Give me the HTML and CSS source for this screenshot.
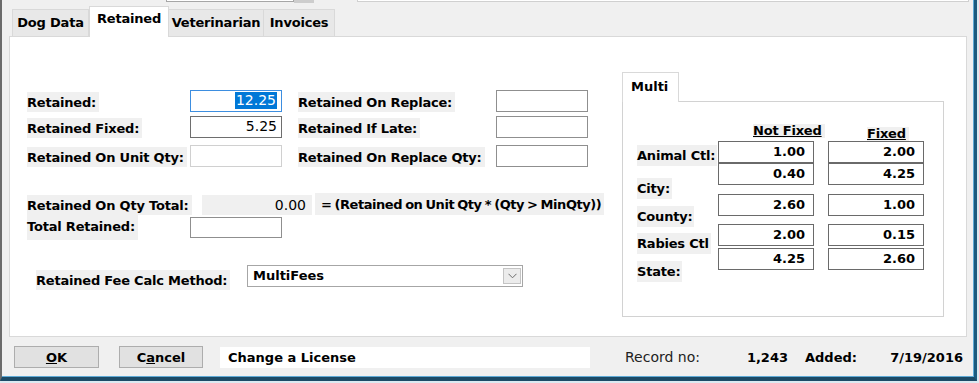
FILE: index.html
```html
<!DOCTYPE html>
<html lang="en">
<head>
    <meta charset="UTF-8">
    <title>Change a License - Retained</title>
    <link rel="stylesheet" href="styles.css">
</head>
<body>
<div class="window">

    <!-- top of the form, cut off -->
    <div class="topbar">
        <span class="combo"></span><span class="combo-btn"></span>
        <span class="topfield"></span>
    </div>

    <!-- Tabs -->
    <div class="tabs">
        <div class="tab">Dog Data</div>
        <div class="tab active">Retained</div>
        <div class="tab">Veterinarian</div>
        <div class="tab">Invoices</div>
    </div>

    <div class="panel">
        <div class="form">
            <div class="row r1">
                <div class="lcell"><span class="lbl">Retained:</span></div>
                <div class="fld focus"><span class="hl">12.25</span></div>
                <div class="lcell2"><span class="lbl">Retained On Replace:</span></div>
                <div class="fld"></div>
            </div>
            <div class="row r2">
                <div class="lcell"><span class="lbl">Retained Fixed:</span></div>
                <div class="fld dark">5.25</div>
                <div class="lcell2"><span class="lbl">Retained If Late:</span></div>
                <div class="fld"></div>
            </div>
            <div class="row r3">
                <div class="lcell"><span class="lbl">Retained On Unit Qty:</span></div>
                <div class="fld faint"></div>
                <div class="lcell2"><span class="lbl">Retained On Replace Qty:</span></div>
                <div class="fld"></div>
            </div>

            <div class="row r4">
                <div class="lcell wide"><span class="lbl">Retained On Qty Total:</span></div>
                <div class="calc">0.00</div>
                <span class="lbl formula">= (Retained on Unit Qty * (Qty &gt; MinQty))</span>
            </div>
            <div class="row r5">
                <div class="lcell"><span class="lbl tall">Total Retained:</span></div>
                <div class="fld"></div>
            </div>

            <div class="row r6">
                <div class="lcell method"><span class="lbl">Retained Fee Calc Method:</span></div>
                <div class="dropdown">
                    <span class="dd-text">MultiFees</span>
                    <span class="dd-btn">
                        <svg width="9" height="6" viewBox="0 0 9 6"><path d="M0.5 0.8 L4.5 4.8 L8.5 0.8" fill="none" stroke="#6b6b6b" stroke-width="1"/></svg>
                    </span>
                </div>
            </div>
        </div>

        <!-- Multi fees group -->
        <div class="multi">
            <div class="mtab">Multi</div>
            <div class="mbox">
                <div class="mlabels">
                    <span class="lbl m1">Animal Ctl:</span>
                    <span class="lbl m2">City:</span>
                    <span class="lbl m3">County:</span>
                    <span class="lbl m4">Rabies Ctl</span>
                    <span class="lbl m5">State:</span>
                </div>
                <div class="mfields">
                    <div class="mhead">
                        <div class="hcell"><span class="lbl head">Not Fixed</span></div>
                        <div class="hcell second"><span class="lbl head low">Fixed</span></div>
                    </div>
                    <div class="mrow"><div class="mfld">1.00</div><div class="mfld">2.00</div></div>
                    <div class="mrow"><div class="mfld">0.40</div><div class="mfld">4.25</div></div>
                    <div class="mrow gap1"><div class="mfld">2.60</div><div class="mfld">1.00</div></div>
                    <div class="mrow gap2"><div class="mfld">2.00</div><div class="mfld">0.15</div></div>
                    <div class="mrow gap3"><div class="mfld">4.25</div><div class="mfld">2.60</div></div>
                </div>
            </div>
        </div>
    </div>

    <!-- Bottom bar -->
    <div class="bottombar">
        <button class="btn"><u>O</u>K</button>
        <button class="btn cancel">C<u>a</u>ncel</button>
        <div class="status">Change a License</div>
        <span class="rec-lbl">Record no:</span>
        <span class="rec-val">1,243</span>
        <span class="added-lbl">Added:</span>
        <span class="added-val">7/19/2016</span>
    </div>
</div>
</body>
</html>
```

FILE: styles.css
```css
/* General */

body {
    margin: 0;
    width: 979px;
    height: 383px;
    overflow: hidden;
    background-color: #dbe9f1;
    font-family: "DejaVu Sans", sans-serif;
    font-size: 13px;
    font-weight: bold;
    color: #000;
}

.window {
    width: 977px;
    height: 381px;
    box-sizing: border-box;
    background-color: #f0f0f0;
    border-left: 2px solid #6b6b6b;
    border-right: 3px solid #1b5a7e;
    border-bottom: 4px solid #1c4a66;
    box-shadow: inset -1px -1px 0 #5eaad6;
}

/* Top strip */
.topbar {
    height: 4px;
    display: flex;
    align-items: flex-start;
}

.combo {
    margin-left: 164px;
    width: 126px;
    height: 1px;
    background: #fff;
    border: 1px solid #a6a6a6;
    border-top: none;
}

.combo-btn {
    width: 20px;
    height: 3px;
    background: #cdcdcd;
}

.topfield {
    margin-left: 43px;
    width: 610px;
    height: 1px;
    background: #fff;
    border: 1px solid #d0d0d0;
    border-top: none;
}

/* Tabs */
.tabs {
    display: flex;
    align-items: flex-end;
    height: 31px;
    margin-top: 2px;
    margin-bottom: -1px;
    padding-left: 10px;
}

.tab {
    height: 27px;
    margin-bottom: 1px;
    box-sizing: border-box;
    line-height: 26px;
    text-align: center;
    background: #e8e8e8;
    border: 1px solid #d9d9d9;
    border-bottom: none;
    letter-spacing: -0.2px;
}

.tab:nth-child(1) { width: 77px; }
.tab:nth-child(2) { width: 80px; }
.tab:nth-child(3) { width: 95px; border-left: none; }
.tab:nth-child(4) { width: 71px; border-left: none; }

.tab.active {
    position: relative;
    z-index: 1;
    height: 31px;
    margin-bottom: 0;
    line-height: 24px;
    background: #fff;
}

.panel {
    display: flex;
    margin-left: 7px;
    width: 958px;
    height: 301px;
    box-sizing: border-box;
    background: #fff;
    border: 1px solid #d9d9d9;
}

/* Form */
.form {
    width: 612px;
    box-sizing: border-box;
    padding-left: 17px;
    padding-top: 53px;
}

.row {
    display: flex;
    align-items: flex-start;
    height: 22px;
}

.r2 { margin-top: 4px; }
.r3 { margin-top: 7px; }
.r4 { margin-top: 26px; }
.r5 { height: 25px; }
.r6 { margin-top: 25px; }

.lcell {
    width: 163px;
    padding-top: 2px;
}

.lcell.wide { width: 175px; }
.lcell.method { width: 211px; padding-left: 9px; padding-top: 5px; }
.r5 .lcell { padding-top: 0; }

.lcell2 {
    width: 198px;
    margin-left: 16px;
    padding-top: 2px;
}

.lbl {
    display: inline-block;
    height: 20px;
    line-height: 21px;
    padding-right: 3px;
    background: #f0f0f0;
    letter-spacing: -0.2px;
    white-space: nowrap;
}

.lbl.tall {
    height: 25px;
    line-height: 23px;
}

.fld {
    width: 92px;
    height: 22px;
    box-sizing: border-box;
    border: 1px solid #8f8f8f;
    background: #fff;
    text-align: right;
    padding-right: 4px;
    font-weight: normal;
    font-size: 14px;
    line-height: 19px;
}

.fld.focus { border-color: #3d8ee0; }
.fld.dark { border-color: #6e6e6e; }
.fld.faint { border-color: #d0d0d0; }
.r5 .fld { margin-top: 2px; height: 21px; }

.hl {
    display: inline-block;
    background: #0078d7;
    color: #fff;
    padding: 0 1px;
    line-height: 17px;
}

.calc {
    width: 110px;
    height: 20px;
    margin-top: 2px;
    box-sizing: border-box;
    padding-right: 6px;
    background: #f0f0f0;
    text-align: right;
    font-weight: normal;
    font-size: 14px;
    line-height: 21px;
}

.formula {
    height: 22px;
    line-height: 24px;
    margin-left: 3px;
    padding-left: 6px;
    letter-spacing: -0.45px;
    word-spacing: -1px;
}

.dropdown {
    display: flex;
    align-items: flex-start;
    width: 276px;
    height: 22px;
    box-sizing: border-box;
    border: 1px solid #a6a6a6;
    background: #fff;
}

.dd-text {
    flex: 1;
    padding-left: 5px;
    line-height: 19px;
}

.dd-btn {
    display: flex;
    align-items: center;
    justify-content: center;
    width: 18px;
    height: 16px;
    margin: 2px 1px 0 0;
    box-sizing: border-box;
    background: #ececec;
    border: 1px solid #c4c4c4;
}

/* Multi group */
.multi {
    margin-top: 35px;
    width: 322px;
}

.mtab {
    position: relative;
    z-index: 1;
    width: 57px;
    height: 30px;
    margin-bottom: -1px;
    box-sizing: border-box;
    padding: 6px 0 0 8px;
    background: #fff;
    border: 1px solid #d9d9d9;
    border-bottom: none;
}

.mbox {
    display: flex;
    height: 216px;
    box-sizing: border-box;
    border: 1px solid #d2d2d2;
    background: #fff;
}

.mlabels {
    display: flex;
    flex-direction: column;
    align-items: flex-start;
    width: 95px;
    box-sizing: border-box;
    padding-left: 14px;
}

.mlabels .lbl { height: 21px; padding-right: 2px; }
.m1 { margin-top: 43px; }
.m2 { margin-top: 12px; }
.m3 { margin-top: 7px; }
.m4 { margin-top: 6px; }
.m5 { margin-top: 7px; }

.mfields {
    padding-top: 21px;
}

.mhead {
    display: flex;
    height: 18px;
}

.hcell {
    width: 110px;
    padding-left: 35px;
    box-sizing: border-box;
}

.hcell.second { padding-left: 39px; }

.lbl.head {
    height: 14px;
    line-height: 13px;
    text-decoration: underline;
}

.lbl.head.low { margin-top: 4px; }

.mrow {
    display: flex;
    gap: 14px;
}

.mrow.gap1 { margin-top: 9px; }
.mrow.gap2 { margin-top: 8px; }
.mrow.gap3 { margin-top: 2px; }

.mfld {
    width: 96px;
    height: 22px;
    box-sizing: border-box;
    border: 1px solid #6a6a6a;
    padding-right: 8px;
    text-align: right;
    line-height: 19px;
}

/* Bottom bar */
.bottombar {
    display: flex;
    align-items: center;
    height: 22px;
    margin-top: 9px;
    padding-left: 12px;
}

.btn {
    width: 85px;
    height: 22px;
    padding: 0;
    background: #e1e1e1;
    border: 1px solid #adadad;
    font-family: "DejaVu Sans", sans-serif;
    font-size: 13px;
    font-weight: bold;
    color: #000;
}

.btn.cancel {
    width: 84px;
    margin-left: 20px;
}

.status {
    width: 370px;
    height: 21px;
    margin-left: 17px;
    box-sizing: border-box;
    padding-left: 8px;
    background: #fff;
    line-height: 21px;
}

.rec-lbl {
    width: 100px;
    margin-left: 35px;
    font-weight: normal;
    font-size: 14px;
    color: #222;
}

.rec-val {
    width: 63px;
    text-align: right;
}

.added-lbl {
    width: 58px;
    margin-left: 17px;
}

.added-val {
    width: 100px;
    text-align: right;
}
```
